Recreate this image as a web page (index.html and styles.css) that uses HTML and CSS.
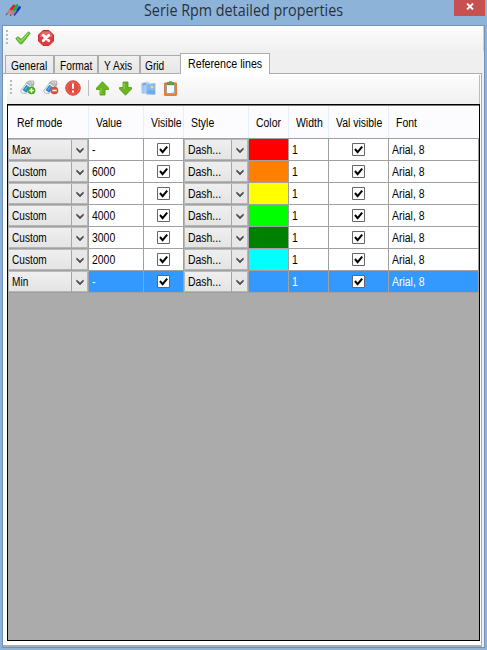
FILE: index.html
```html
<!DOCTYPE html>
<html lang="en">
<head>
<meta charset="utf-8">
<title>Serie Rpm detailed properties</title>
<link rel="stylesheet" href="styles.css">
</head>
<body>
<svg width="0" height="0" class="defs">
  <symbol id="chev" viewBox="0 0 8 7"><path d="M0.7 1v1.600L4 6l3.300-3.400V1L4 3.800z" fill="#555" stroke="#555" stroke-width=".7"/></symbol>
  <symbol id="box" viewBox="0 0 13 13"><path d="M.5.5h12v12H.5z" fill="#fff" stroke="#666"/><path d="M3 6l2.600 3.200L10.200 3.600" fill="none" stroke="#000" stroke-width="2"/></symbol>
  <symbol id="tag" viewBox="0 0 17 17"><path d="M6 3l3-2 4.500 0 .5 3-2 5-3 2z" fill="#b9b9b9" stroke="#999" stroke-width=".7"/><path d="M9 1.500l2 2M11.500 1l1.500 2" stroke="#f4f4f4" stroke-width=".9"/><path d="M.8 10.500L6.500 3l5 3.500-5.500 7-4.500-.5z" fill="#f2f6f8" stroke="#a4abb0" stroke-width=".8"/><path d="M2.500 10L6.500 4.800l3.700 2.600-4 5.300z" fill="#258cc8"/><path d="M4.800 10l3-3.800" stroke="#6fbde6"/></symbol>
</svg>
<div class="window">
  <header class="titlebar">
    <svg class="logo" width="17" height="15" viewBox="0 0 17 15"><g fill="none" stroke-linecap="round" stroke-width="2.800"><path d="M6 6.500l3-3.500" stroke="#e02028"/><path d="M12 8l2.500-3.500" stroke="#1730d8"/><path d="M8.500 8l3.500-5.500" stroke="#10b040"/></g><path d="M.5 11.500L4.500 6l3 2L2 12zM4.500 12.500l3-5.500 2.800 2.200L6 13zM8.500 13l2.500-6 2.500 2z" fill="#b77f84"/><path d="M9 12.500l3.500-4.500" stroke="#2237c4" stroke-width="1.500"/><path d="M.8 11.800l1.500-1M5 12.500l1.200-1" stroke="#533"/></svg>
    <h1>Serie Rpm detailed properties</h1>
    <div class="close"><svg width="8" height="7" viewBox="0 0 8 7"><path d="M1 .5l6 6M7 .5l-6 6" stroke="#fff" stroke-width="1.800"/></svg></div>
  </header>
  <main class="client">
    <div class="toolbar main-tools">
      <i class="grip"></i>
      <svg class="ok" width="16" height="14" viewBox="0 0 16 14"><path d="M.7 7.500l2.500-1.700 3 2.700L13.500.8l1.700 1.400L7 12.800H5z" fill="#62c52b" stroke="#49982d" stroke-width=".8"/><path d="M2 7.500l4 3 7.500-8.500" fill="none" stroke="#a5ea6c"/></svg>
      <svg class="cancel" width="16" height="16" viewBox="0 0 16 16"><path d="M5 .5h6L15.500 5v6L11 15.500H5L.5 11V5z" fill="#e43b3b" stroke="#cf2b2d"/><path d="M2 7V5l3-3.500h6L14 5v2z" fill="#f28884" opacity=".6"/><path d="M5.200 5.200l5.600 5.600M10.800 5.200l-5.600 5.600" stroke="#fff" stroke-width="2.800" stroke-linecap="round"/></svg>
    </div>
    <nav class="tabs">
      <div class="tab t1"><span>General</span></div><div class="tab t2"><span>Format</span></div><div class="tab t3"><span>Y Axis</span></div><div class="tab t4"><span>Grid</span></div><div class="tab active"><span>Reference lines</span></div>
    </nav>
    <section class="page">
      <div class="toolbar line-tools">
        <i class="grip"></i>
        <svg class="i1" width="17" height="17" viewBox="0 0 17 17"><use href="#tag"/><circle cx="11.500" cy="10.500" r="3.800" fill="#47a51c"/><path d="M11.500 8.300v4.400M9.300 10.500h4.400" stroke="#fff" stroke-width="1.500"/></svg>
        <svg class="i2" width="17" height="17" viewBox="0 0 17 17"><use href="#tag"/><circle cx="11.500" cy="10.500" r="3.800" fill="#e34834"/><path d="M9.300 10.500h4.400" stroke="#fff" stroke-width="1.600"/></svg>
        <svg class="i3" width="16" height="16" viewBox="0 0 16 16"><circle cx="8" cy="8" r="7.300" fill="#e34b3c" stroke="#d0594d"/><circle cx="8" cy="8" r="5.800" fill="none" stroke="#ec6a5b"/><path d="M8 3.500v5.300M8 10.500v2" stroke="#fff" stroke-width="2"/></svg>
        <i class="sep"></i>
        <svg class="i4" width="13" height="15" viewBox="0 0 13 15"><path d="M6.500.7L12.500 7v1.500H9V14H4V8.500H.5V7z" fill="#6db51c" stroke="#51981a" stroke-width=".8"/><path d="M5 7v6" stroke="#98d44c"/></svg>
        <svg class="i5" width="13" height="15" viewBox="0 0 13 15"><path d="M6.500 14.300L.5 8V6.500H4V1h5v5.500h3.500V8z" fill="#6db51c" stroke="#51981a" stroke-width=".8"/><path d="M5 2v6" stroke="#98d44c"/></svg>
        <svg class="i6" width="15" height="15" viewBox="0 0 15 15"><path d="M.5 2.500L6 1v11l-5 .5zM4 1.500h4V12H4z" fill="#9bc4f1" stroke="#b7d4f6"/><path d="M5.500 3.500l8.500-1v11l-8.500-.5z" fill="#80b7ee" stroke="#9bc2ee"/><path d="M6 10l3-1 2 1 3-1v4l-8-.5z" fill="#75a9e2"/><path d="M2 3h3" stroke="#5579c5"/><circle cx="11" cy="6" r="1.500" fill="#f2e44b"/></svg>
        <svg class="i7" width="13" height="15" viewBox="0 0 13 15"><path d="M.7 2h11.600v12.300H.7z" fill="#ed8a2c" stroke="#dc671e"/><path d="M2.500 3.500h8v9h-8z" fill="#f5f8fa" stroke="#8297a5" stroke-width=".7"/><path d="M10.500 9.500v3h-3z" fill="#acc5d4"/><path d="M3.500 1.500h1.300l.7-1h2l.7 1h1.300v2.300h-6z" fill="#4eac45" stroke="#307a36" stroke-width=".5"/></svg>
      </div>
      <div class="grid-view">
        <div class="row head"><div><span>Ref mode</span></div><div><span>Value</span></div><div><span>Visible</span></div><div><span>Style</span></div><div><span>Color</span></div><div><span>Width</span></div><div><span>Val visible</span></div><div><span>Font</span></div></div>
        <div id="rows"></div>
      </div>
    </section>
  </main>
</div>
<script src="rows.js"></script>
</body>
</html>
```
FILE: rows.js
```js
const rows = [
  ['Max', '-', 'red'],
  ['Custom', '6000', 'orange'],
  ['Custom', '5000', 'yellow'],
  ['Custom', '4000', 'lime'],
  ['Custom', '3000', 'green'],
  ['Custom', '2000', 'cyan'],
  ['Min', '-', 'none']
];
const combo = text => `<div class="combo"><b><span>${text}</span></b><i><svg width="8" height="7"><use href="#chev"/></svg></i></div>`;
const check = '<div class="check"><svg width="13" height="13"><use href="#box"/></svg></div>';
document.getElementById('rows').innerHTML = rows.map(([mode, value, color]) =>
  `<div class="row ${color === 'none' ? 'selected' : ''}">${combo(mode)}<div><span>${value}</span></div>${check}${combo('Dash...')}<div class="${color}"></div><div><span>1</span></div>${check}<div><span>Arial, 8</span></div></div>`
).join('');
```
FILE: styles.css
```css
* { box-sizing: border-box; }
body { margin: 0; font: 12px/14px "Liberation Sans", Arial, sans-serif; color: #000; }
.defs { display: block; position: absolute; }
svg { display: block; flex: none; }
span { display: inline-block; white-space: nowrap; transform: scaleX(.87); transform-origin: 0 50%; }
.window { width: 487px; height: 650px; background: #8eb3d9; padding: 0 2px 2px 2px; overflow: hidden; }
.titlebar { height: 25px; display: flex; position: relative; }
.logo { margin: 3px 0 0 3px; }
h1 { margin: 0 0 0 122px; font: 15.5px/21px "Open Sans", "Noto Sans", sans-serif; color: #27323f; white-space: nowrap; transform: scaleX(.925); transform-origin: 0 50%; }
.close { position: absolute; right: 0; top: 0; width: 31px; height: 16px; background: #c75050; display: flex; justify-content: center; padding-top: 3px; }
.client { height: 623px; border: 1px solid #7392b6; background: #efefef; display: flex; flex-direction: column; }
.toolbar { display: flex; background: linear-gradient(#fdfdfd, #f0f0f0); flex: none; }
.main-tools { height: 25px; border-right: 1px solid #d0d0d0; }
.grip { width: 2px; height: 15px; background: repeating-linear-gradient(#b9b9b9 0 2px, transparent 2px 4px); flex: none; }
.main-tools .grip { margin: 4px 0 0 3px; }
.ok { margin: 5px 0 0 7px; }
.cancel { margin: 4px 0 0 7px; }
.tabs { display: flex; align-items: flex-end; height: 24px; padding-left: 2px; margin-top: -2px; position: relative; z-index: 1; }
.tab { height: 18px; border: 1px solid #acacac; border-bottom: 0; background: linear-gradient(#f0f0f0, #e6e6e6); padding: 3px 0 0 5px; }
.tab span { transform: scaleX(.85); }
.t1 { width: 49px; } .t2 { width: 44px; } .t3 { width: 42px; } .t4 { width: 41px; border-right: 0; }
.t3 { padding-left: 5px; } .t4 { padding-left: 4px; }
.active { width: 90px; height: 21px; margin-bottom: -1px; background: #fff; padding: 3px 0 0 7px; margin-left: -1px; }
.active span { transform: scaleX(.89); }
.page { flex: 1; border: 1px solid #acacac; border-left: 0; margin-right: 2px; background: #fff; padding: 1px 1px 4px 4px; display: flex; flex-direction: column; border-bottom-width: 2px; }
.line-tools { height: 29px; border-right: 1px solid #bbb; }
.line-tools .grip { margin: 5px 0 0 3px; height: 14px; }
.i1 { margin: 5px 0 0 8px; } .i2 { margin: 5px 0 0 6px; } .i3 { margin: 5px 0 0 5px; }
.sep { width: 1px; height: 16px; margin: 5px 0 0 7px; background: #bdbdbd; }
.i4 { margin: 6px 0 0 7px; } .i5 { margin: 6px 0 0 10px; } .i6 { margin: 6px 0 0 9px; } .i7 { margin: 6px 0 0 8px; }
.grid-view { flex: 1; border: 1px solid #000; background: #ababab; box-shadow: inset 0 1px #777; }
.row { display: grid; grid-template-columns: 81px 55px 40px 65px 40px 40px 60px 90px; height: 22px; background: #fff; }
.row > div { border-right: 1px solid #a0a0a0; border-bottom: 1px solid #a0a0a0; padding: 4px 0 0 3px; overflow: hidden; }
.row.head { height: 33px; margin-top: 1px; background: #fcfcfe; border-bottom: 1px solid #a0a0a0; }
.row.head > div { border-bottom: 0; border-right-color: #e5edf8; padding: 10px 0 0 7px; }
.row.head > div:first-child { padding-left: 9px; }
.row.head > div:last-child { border-right: 0; }
.row > .combo { padding: 0; display: flex; background: #e7e7e7; border: 1px solid #a0a0a0; border-top-color: #bcbcbc; border-left-color: #b8b8b8; box-shadow: inset 0 -1px #b5b5b5, inset -1px 0 #b5b5b5; }
.combo b { flex: 1; font-weight: normal; padding: 3px 0 0 3px; background: linear-gradient(#efefef, #e4e4e4); margin-bottom: 1px; }
.combo i { width: 17px; border-left: 1px solid #a5a5a5; display: flex; align-items: center; padding-left: 4px; }
.row > .combo:first-child b span { transform: scaleX(.84); }
.row > .check { padding: 4px 0 0 13px; }
.row > .check:nth-child(7) { padding-left: 23px; }
.row .red { background: #f00; } .row .orange { background: #ff8000; } .row .yellow { background: #ff0; } .row .lime { background: #0f0; } .row .green { background: #008000; } .row .cyan { background: #0ff; }
.selected { background: #3399ff; color: #fff; }
.selected .combo { color: #000; }
```
